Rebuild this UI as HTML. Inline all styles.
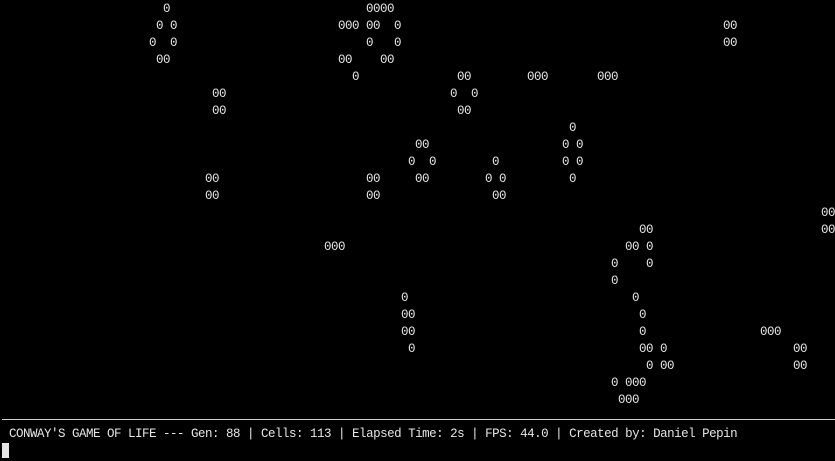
<!DOCTYPE html>
<html><head><meta charset="utf-8"><style>
html,body{margin:0;padding:0;background:#000;width:835px;height:461px;overflow:hidden}
body{position:relative;font-family:"Liberation Mono",monospace;font-size:12.5px;letter-spacing:-0.5px;color:#e6e6e6}
.s{position:absolute;white-space:pre;line-height:17px;height:17px;margin-top:1px}
#cur{position:absolute;left:2px;top:443px;width:7px;height:15px;background:#e6e6e6}
</style></head><body>
<div class="s" style="left:163px;top:0px">0</div>
<div class="s" style="left:366px;top:0px">0000</div>
<div class="s" style="left:156px;top:17px">0 0</div>
<div class="s" style="left:338px;top:17px">000 00  0</div>
<div class="s" style="left:723px;top:17px">00</div>
<div class="s" style="left:149px;top:34px">0  0</div>
<div class="s" style="left:366px;top:34px">0   0</div>
<div class="s" style="left:723px;top:34px">00</div>
<div class="s" style="left:156px;top:51px">00</div>
<div class="s" style="left:338px;top:51px">00    00</div>
<div class="s" style="left:352px;top:68px">0</div>
<div class="s" style="left:457px;top:68px">00</div>
<div class="s" style="left:527px;top:68px">000</div>
<div class="s" style="left:597px;top:68px">000</div>
<div class="s" style="left:212px;top:85px">00</div>
<div class="s" style="left:450px;top:85px">0  0</div>
<div class="s" style="left:212px;top:102px">00</div>
<div class="s" style="left:457px;top:102px">00</div>
<div class="s" style="left:569px;top:119px">0</div>
<div class="s" style="left:415px;top:136px">00</div>
<div class="s" style="left:562px;top:136px">0 0</div>
<div class="s" style="left:408px;top:153px">0  0</div>
<div class="s" style="left:492px;top:153px">0</div>
<div class="s" style="left:562px;top:153px">0 0</div>
<div class="s" style="left:205px;top:170px">00</div>
<div class="s" style="left:366px;top:170px">00</div>
<div class="s" style="left:415px;top:170px">00</div>
<div class="s" style="left:485px;top:170px">0 0</div>
<div class="s" style="left:569px;top:170px">0</div>
<div class="s" style="left:205px;top:187px">00</div>
<div class="s" style="left:366px;top:187px">00</div>
<div class="s" style="left:492px;top:187px">00</div>
<div class="s" style="left:821px;top:204px">00</div>
<div class="s" style="left:639px;top:221px">00</div>
<div class="s" style="left:821px;top:221px">00</div>
<div class="s" style="left:324px;top:238px">000</div>
<div class="s" style="left:625px;top:238px">00 0</div>
<div class="s" style="left:611px;top:255px">0    0</div>
<div class="s" style="left:611px;top:272px">0</div>
<div class="s" style="left:401px;top:289px">0</div>
<div class="s" style="left:632px;top:289px">0</div>
<div class="s" style="left:401px;top:306px">00</div>
<div class="s" style="left:639px;top:306px">0</div>
<div class="s" style="left:401px;top:323px">00</div>
<div class="s" style="left:639px;top:323px">0</div>
<div class="s" style="left:760px;top:323px">000</div>
<div class="s" style="left:408px;top:340px">0</div>
<div class="s" style="left:639px;top:340px">00 0</div>
<div class="s" style="left:793px;top:340px">00</div>
<div class="s" style="left:646px;top:357px">0 00</div>
<div class="s" style="left:793px;top:357px">00</div>
<div class="s" style="left:611px;top:374px">0 000</div>
<div class="s" style="left:618px;top:391px">000</div>
<div style="position:absolute;left:2px;top:419px;width:833px;height:1px;background:#cfcfcf"></div>
<div class="s" style="left:2px;top:425px"> CONWAY'S GAME OF LIFE --- Gen: 88 | Cells: 113 | Elapsed Time: 2s | FPS: 44.0 | Created by: Daniel Pepin</div>
<div id="cur"></div>
</body></html>
